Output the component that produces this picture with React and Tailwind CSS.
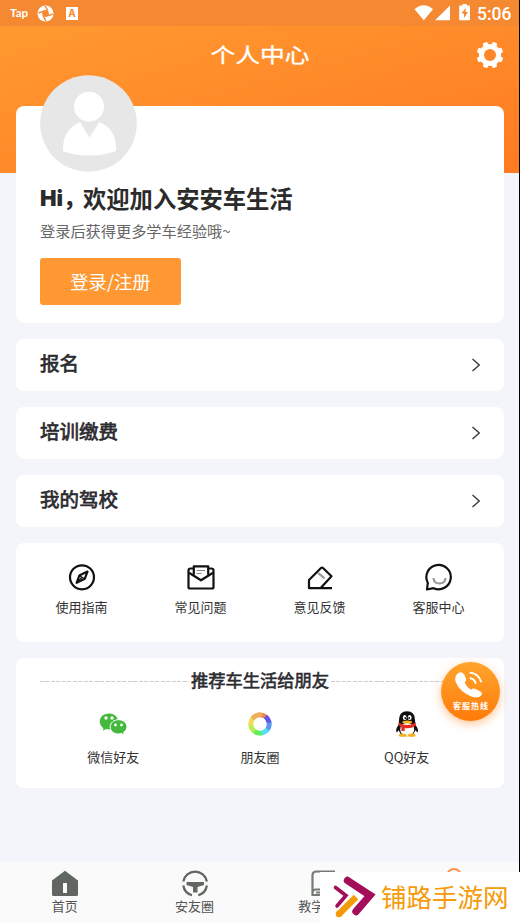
import { clsx } from 'clsx';

const menu = ['报名', '培训缴费', '我的驾校'];

function StatusBar() {
  return (
    <div className="h-[26px] bg-[#f58931] flex items-center text-white">
      <span className="ml-[10px] w-[20px] text-[11.500px] leading-[24px] font-bold font-[Lato,sans-serif] whitespace-nowrap">Tap</span>
      <svg className="ml-[7px]" width="17" height="17" viewBox="0 0 17 17">
        <circle cx="8.5" cy="8.5" r="8" fill="#fff" />
        <circle cx="8.5" cy="8.5" r="3.400" fill="#f58931" />
        <path d="M1.500 8 6.200 6.300M8 1.200l3 4.500M15.700 9 10.800 10.800M9 15.800 6.200 11.200" stroke="#f58931" strokeWidth="1.400" fill="none" />
      </svg>
      <span className="ml-[12px] w-[12px] h-[13px] bg-white text-[#f58931] text-[10px] leading-[13px] font-bold text-center font-[Inter,sans-serif]">A</span>
      <div className="ml-auto flex items-center">
        <svg width="57" height="18" viewBox="0 0 57 18" fill="#fff">
          <path d="M.5 5.2Q9.8-2.5 19 5.2L9.8 16.2Z" />
          <path d="M21 16.2H36V1.4Z" />
          <path fillRule="evenodd" d="M48.4 0h4.4v1.6h2.4q.8 0 .8.8v13q0 .8-.8.8h-9.2q-.8 0-.8-.8v-13q0-.8.8-.8h2.4ZM51.6 4l-4.2 5.5h2.6V14l4-6h-2.4Z" />
        </svg>
        <span className="ml-[6px] w-[42px] mt-[1px] text-[17.5px] leading-[24px] font-medium font-[Roboto,sans-serif] whitespace-nowrap">5:06</span>
      </div>
    </div>
  );
}

function GearIcon() {
  return (
    <svg width="26" height="26" viewBox="-13 -13 26 26">
      <g fill="#fff">
        <circle r="11" />
        {[22.5, 67.5, 112.5, 157.5, 202.5, 247.5, 292.5, 337.5].map((a) => (
          <rect key={a} x="-2.5" y="-13.400" width="5" height="6" rx="1.300" transform={`rotate(${a})`} />
        ))}
      </g>
      <circle r="6" fill="#ff8628" />
    </svg>
  );
}

function Avatar() {
  return (
    <svg className="absolute left-[24px] top-[-31px]" width="97" height="97" viewBox="0 0 97 97">
      <circle cx="48.5" cy="48.5" r="48.3" fill="#e7e7e7" />
      <circle cx="49" cy="31.7" r="15" fill="#fff" />
      <path d="M40 47 49.3 62.5 59.5 47Q76 54 76 73.5V76Q64 80.5 49 80.5T23 76V73.5Q23 55 40 47Z" fill="#fff" />
    </svg>
  );
}

function CompassIcon() {
  return (
    <svg width="28" height="28" viewBox="0 0 28 28" fill="none" stroke="#111" strokeWidth="2.200">
      <circle cx="14" cy="14.300" r="12" />
      <path d="M19.500 8.600 16.800 15.700 8.600 19.800 11.300 12.600Z" strokeLinejoin="round" />
      <path d="m11.500 12.800 5 3M14 14.300l-4.500 4.500" strokeWidth="1.300" />
    </svg>
  );
}

function MailIcon() {
  return (
    <svg width="28" height="28" viewBox="0 0 28 28" fill="none" stroke="#111" strokeWidth="2.200" strokeLinejoin="round">
      <path d="M7 5.500H3.500Q1.500 5.500 1.500 7.500V24Q1.500 25.500 3 25.500H25Q26.500 25.500 26.500 24V7.500Q26.500 5.500 24.500 5.500H21" />
      <path d="M2 9.700 14 17.300 26 9.700" />
      <path d="M6.800 11.800V3.300H21.200V11.800" />
      <path d="M9.500 7.500H18M9.500 10.500H14.500" stroke="#888" strokeWidth="1.200" />
    </svg>
  );
}

function EraserIcon() {
  return (
    <svg width="28" height="28" viewBox="0 0 28 28" fill="none" stroke="#111" strokeWidth="2.200" strokeLinejoin="round">
      <path d="M26 25.200H3V17L15 5Q16 4 17 5L25.500 13.300 14.700 25" />
      <path d="m12 9.800 6.500 5.500" stroke="#999" />
    </svg>
  );
}

function SmileIcon() {
  return (
    <svg width="28" height="28" viewBox="0 0 28 28" fill="none" stroke="#111" strokeWidth="2.200" strokeLinejoin="round">
      <path d="M2 26.500 2.800 19.800A12.200 12.200 0 1 1 8.500 25.200Z" />
      <path d="M8.500 15Q9 20.500 14.500 20.500T20.500 15" stroke="#999" />
    </svg>
  );
}

function WechatIcon() {
  return (
    <svg width="28" height="28" viewBox="0 0 28 28">
      <path d="M10 3.500C4.600 3.500.700 7.100.700 11.500 0.700 14.300 2.300 16.700 4.500 18.200L3.800 20.800 7.200 19Q14 20.500 17.500 16.500 20 12.500 18.500 8.500 16 3.500 10 3.500Z" fill="#45b93c" />
      <path d="M19.500 9.700C15 9.700 11.200 12.700 11.200 17S15 24 19.500 24L22.500 23.500 25.300 25 24.600 22.400Q28 20.300 28 17C28 12.700 24 9.700 19.500 9.700Z" fill="#45b93c" stroke="#fff" strokeWidth="1" />
      <g fill="#fff">
        <circle cx="7" cy="8" r="1.700" />
        <circle cx="13" cy="8" r="1.700" />
        <circle cx="16.500" cy="15" r="1.400" />
        <circle cx="22.500" cy="15" r="1.400" />
      </g>
    </svg>
  );
}

const petals = ['#ee8152', '#6254e8', '#5b96ef', '#55dff2', '#5df05b', '#b5ef57', '#f1dc58', '#eeae58'];

function MomentsIcon() {
  return (
    <svg width="28" height="28" viewBox="-14 -14 28 28">
      {petals.map((c, i) => (
        <path key={c} d="M-4.700-10.600A11.600 11.600 0 0 1 5-10.500L8-6-3-6.200Z" fill={c} transform={`rotate(${i * 45 + 15})`} />
      ))}
      <circle r="6.700" fill="#fff" />
    </svg>
  );
}

function QQIcon() {
  return (
    <svg width="28" height="28" viewBox="0 0 28 28">
      <path d="M6 14.500Q2 19 3.600 22.500L7 19M22 14.500Q26 19 24.600 22.500L21 19" fill="#111" />
      <path d="M14 1.200Q6 1.200 6 10L5.500 17Q5.500 26.300 14 26.300T22.700 17L22 10Q22 1.200 14 1.200Z" fill="#111" />
      <ellipse cx="14.200" cy="19.500" rx="7" ry="6.700" fill="#fff" />
      <path d="M5.700 12.500Q14 17.500 22.500 12.500L23 15.800Q17 19.200 11.700 18V21H8.400V17Q5 15.500 5.700 12.500Z" fill="#e52c22" />
      <ellipse cx="9.700" cy="25.300" rx="4" ry="1.700" fill="#f5b422" />
      <ellipse cx="18.700" cy="25.300" rx="4" ry="1.700" fill="#f5b422" />
      <ellipse cx="11.700" cy="7.500" rx="1.900" ry="2.500" fill="#fff" />
      <ellipse cx="16.700" cy="7.500" rx="1.900" ry="2.500" fill="#fff" />
      <circle cx="12.300" cy="8" r=".9" fill="#111" />
      <circle cx="16.200" cy="8" r=".9" fill="#111" />
      <ellipse cx="14.200" cy="12" rx="5" ry="1.600" fill="#f5b422" />
    </svg>
  );
}

const tools = [
  { label: '使用指南', icon: CompassIcon },
  { label: '常见问题', icon: MailIcon },
  { label: '意见反馈', icon: EraserIcon },
  { label: '客服中心', icon: SmileIcon },
];

const shares = [
  { label: '微信好友', icon: WechatIcon },
  { label: '朋友圈', icon: MomentsIcon },
  { label: 'QQ好友', icon: QQIcon },
];

function IconItem({ label, icon: Icon, className }) {
  return (
    <div className={clsx('flex-1 flex flex-col items-center text-[13px] leading-[20px] text-[#333]', className)}>
      <Icon />
      <span>{label}</span>
    </div>
  );
}

function Hotline() {
  return (
    <div className="absolute right-[4px] top-[4px] w-[59px] h-[59px] rounded-full bg-linear-to-b from-[#ffa42b] to-[#ff7b05] shadow-[0_3px_10px_rgba(255,130,30,0.45)] flex flex-col items-center text-white">
      <svg className="mt-[9px] ml-[-3px]" width="30" height="28" viewBox="0 0 30 28">
        <path d="M5.500 1.500Q8.500.500 10.500 4L12 7.500Q12.800 9.800 10.500 11.500 12.500 16 17 18.800 19 16.800 21.500 18L26.500 20.500Q29 22 27.300 24.300 24 28 17.500 25.500 6 21 1.600 11 0 4 5.500 1.500Z" fill="#fff" />
        <path d="M16.500 7.200Q20.300 8 21.600 12M16.500 1.800Q24.500 2.800 27 10.500" fill="none" stroke="#fff" strokeWidth="2" strokeLinecap="round" />
      </svg>
      <span className="mt-px text-[8px] leading-[12px] font-bold tracking-[1px] pl-px whitespace-nowrap">客服热线</span>
    </div>
  );
}

function TabBar() {
  return (
    <nav className="relative mt-auto h-[60px] shrink-0 bg-[#fafafa] flex text-[13px] leading-[18px] text-[#555]">
      <div className="flex-1 flex flex-col items-center pt-[8px]">
        <svg width="28" height="27" viewBox="0 0 28 27">
          <path fillRule="evenodd" d="M14 .8 27 10.500V24.500Q27 26 25.500 26H2.500Q1 26 1 24.500V10.500ZM12 13V23H16V13Z" fill="#606660" />
        </svg>
        <span>首页</span>
      </div>
      <div className="flex-1 flex flex-col items-center pt-[8px]">
        <svg width="28" height="27" viewBox="0 0 28 27">
          <g fill="none" stroke="#606660" strokeWidth="2.200">
            <path d="M2.300 11.500A12 12 0 0 1 25.900 11.500M2.300 15.500A12 12 0 0 0 11 25.200M25.900 15.500A12 12 0 0 1 17.200 25.200" />
          </g>
          <path d="M5.500 12H23V15L16.500 17V22.500H12V17L5.500 15Z" fill="#606660" />
        </svg>
        <span>安友圈</span>
      </div>
      <div className="flex-1 flex flex-col items-center pt-[8px]">
        <svg width="28" height="27" viewBox="0 0 28 27" fill="none" stroke="#757a75" strokeWidth="2.200">
          <path d="M25 1.500H6.500Q2.500 1.500 2.500 5.500V25H26M2.500 23Q2.500 19.500 6 19.500H26M6 22.500H12" />
        </svg>
        <span>教学视频</span>
      </div>
      <div className="flex-1 flex flex-col items-center pt-[6px]">
        <svg width="28" height="29" viewBox="0 0 28 29" fill="none" stroke="#ff924d" strokeWidth="2">
          <circle cx="14" cy="8" r="7" />
          <path d="M2 27Q3 17 14 17T26 27Z" />
        </svg>
      </div>

      {/* Site badge over the last tabs */}
      <div className="absolute left-[320px] bottom-0 w-[200px] h-[50px] bg-white flex items-center text-[#f59a08]">
        <svg className="ml-[12px]" width="46" height="44" viewBox="0 0 46 44" fill="none">
          <path d="M3.500 12.500 14 20.500 5 31" stroke="#a30d59" strokeWidth="3.600" strokeLinecap="round" />
          <path d="M15.500 5.500 38 20.300 24 36.500" stroke="#a30d59" strokeWidth="7.400" strokeLinecap="round" />
          <path d="M7 39 24 22" stroke="#f59a08" strokeWidth="6.600" />
          <circle cx="7" cy="39" r="3.300" fill="#f59a08" />
        </svg>
        <span className="ml-[3px] mt-[-2px] text-[25.500px] leading-[50px] whitespace-nowrap">铺路手游网</span>
      </div>
    </nav>
  );
}

export default function App() {
  return (
    <div className="w-[520px] h-[922px] bg-black font-['Noto_Sans_CJK_SC',sans-serif]">
      <main className="w-[519px] h-full bg-[#f4f5fa] flex flex-col">
        <header className="h-[173px] shrink-0 bg-linear-165 from-[#ff9c31] to-[#ff7a22]">
          <StatusBar />
          <div className="h-[58px] grid grid-cols-[1fr_auto_1fr] items-center px-[16px]">
            <h1 className="col-start-2 scale-x-[1.24] text-[20px] leading-[30px] text-white [-webkit-text-stroke:0.3px_#fff]">个人中心</h1>
            <div className="justify-self-end"><GearIcon /></div>
          </div>
        </header>

        <div className="mt-[-67px] pl-[16px] pr-[15px] flex flex-col gap-[16px]">
          <section className="relative h-[217px] bg-white rounded-lg pl-[24px] pt-[75px]">
            <Avatar />
            <h2 className="text-[23.300px] leading-[34px] font-bold text-[#2b2b2b] whitespace-nowrap flex">
              <span className="w-[43px] font-[Inter,'Noto_Sans_CJK_SC',sans-serif] font-black text-[22px]">Hi，</span>
              <span>欢迎加入安安车生活</span>
            </h2>
            <p className="mt-[4px] text-[15.200px] leading-[22px] text-[#666]">登录后获得更多学车经验哦~</p>
            <button className="mt-[17px] block w-[141px] h-[47px] rounded-[3px] bg-[#ff9833] text-white text-[18.300px] leading-[46px] pb-[4px]">登录/注册</button>
          </section>

          {menu.map((item) => (
            <section key={item} className="h-[52px] bg-white rounded-lg pl-[24px] pr-[23px] flex justify-between">
              <span className="text-[19.500px] leading-[47px] text-[#2b2b30] [-webkit-text-stroke:0.700px_#2b2b30]">{item}</span>
              <svg className="self-center" width="10" height="14" viewBox="0 0 10 14" fill="none" stroke="#333" strokeWidth="1.300">
                <path d="M1.500 1 8.300 7 1.500 13" />
              </svg>
            </section>
          ))}

          <section className="h-[99px] bg-white rounded-lg px-[6px] pt-[20px] flex">
            {tools.map((t) => <IconItem key={t.label} {...t} className="gap-[6px]" />)}
          </section>

          <section className="relative h-[130px] mt-[-0.500px] bg-white rounded-lg">
            <div className="pt-[8px] px-[24px] flex items-center gap-[2px]">
              <span className="flex-1 h-px bg-[repeating-linear-gradient(90deg,#ccc_0_4px,transparent_4px_5.500px)] mt-[3px]" />
              <span className="text-[17.300px] leading-[28px] text-[#2b2b30] [-webkit-text-stroke:0.600px_#2b2b30]">推荐车生活给朋友</span>
              <span className="flex-1 h-px bg-[repeating-linear-gradient(90deg,#ccc_0_4px,transparent_4px_5.500px)] mt-[3px]" />
            </div>
            <div className="px-[24px] mt-[16px] flex">
              {shares.map((s) => <IconItem key={s.label} {...s} className="gap-[9px]" />)}
            </div>
            <Hotline />
          </section>
        </div>

        <TabBar />
      </main>
    </div>
  );
}
